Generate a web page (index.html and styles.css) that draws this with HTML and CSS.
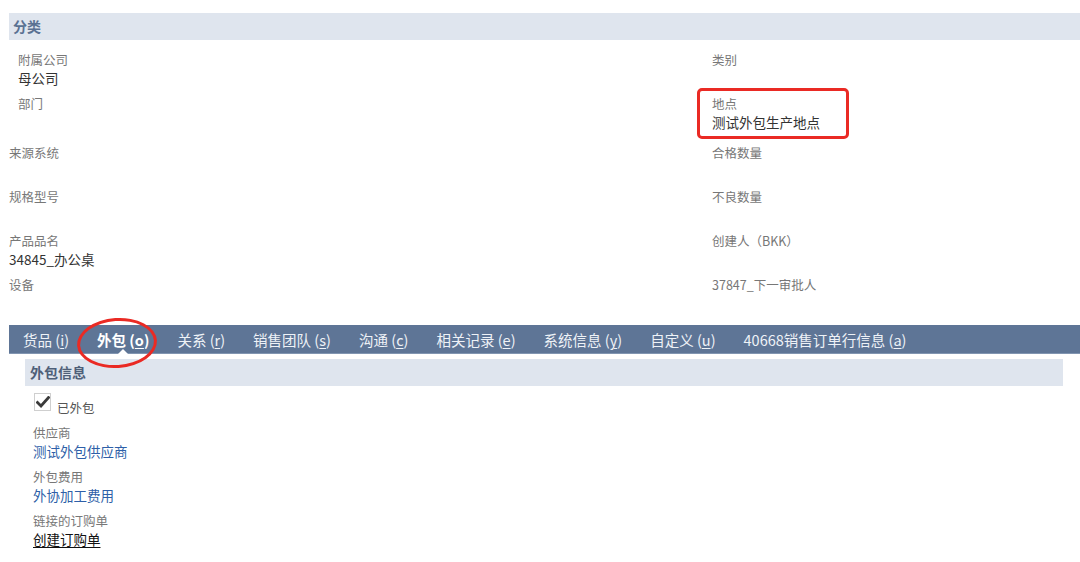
FILE: index.html
```html
<!DOCTYPE html>
<html lang="zh-CN">
<head>
    <meta charset="UTF-8">
    <title>分类</title>
    <link rel="stylesheet" href="styles.css">
</head>
<body>
    <div class="section-head">分类</div>

    <div class="fields">
        <div class="col">
            <div class="field indent">
                <div class="label">附属公司</div>
                <div class="value">母公司</div>
            </div>
            <div class="field indent">
                <div class="label">部门</div>
            </div>
            <div class="field gap-top">
                <div class="label">来源系统</div>
            </div>
            <div class="field">
                <div class="label">规格型号</div>
            </div>
            <div class="field">
                <div class="label">产品品名</div>
                <div class="value">34845_办公桌</div>
            </div>
            <div class="field">
                <div class="label">设备</div>
            </div>
        </div>
        <div class="col right">
            <div class="field">
                <div class="label">类别</div>
            </div>
            <div class="field marked">
                <div class="label">地点</div>
                <div class="value">测试外包生产地点</div>
                <span class="mark-box"></span>
            </div>
            <div class="field gap-top">
                <div class="label">合格数量</div>
            </div>
            <div class="field">
                <div class="label">不良数量</div>
            </div>
            <div class="field">
                <div class="label">创建人（BKK）</div>
            </div>
            <div class="field">
                <div class="label">37847_下一审批人</div>
            </div>
        </div>
    </div>

    <div class="tabs">
        <div class="tab">货品 (<u>i</u>)</div>
        <div class="tab active">外包 (<u>o</u>)<span class="mark-ring"></span></div>
        <div class="tab">关系 (<u>r</u>)</div>
        <div class="tab">销售团队 (<u>s</u>)</div>
        <div class="tab">沟通 (<u>c</u>)</div>
        <div class="tab">相关记录 (<u>e</u>)</div>
        <div class="tab">系统信息 (<u>y</u>)</div>
        <div class="tab">自定义 (<u>u</u>)</div>
        <div class="tab">40668销售订单行信息 (<u>a</u>)</div>
    </div>

    <div class="panel">
        <div class="sub-head">外包信息</div>
        <div class="check-row">
            <span class="checkbox">
                <svg width="14" height="12" viewBox="0 0 14 12"><path d="M1.5 6.5 L5 10 L12.5 1.5" fill="none" stroke="#3a3a3a" stroke-width="2.8" stroke-linecap="square"/></svg>
            </span>
            <span class="check-label">已外包</span>
        </div>
        <div class="field first">
            <div class="label">供应商</div>
            <div class="value link">测试外包供应商</div>
        </div>
        <div class="field">
            <div class="label">外包费用</div>
            <div class="value link">外协加工费用</div>
        </div>
        <div class="field">
            <div class="label">链接的订购单</div>
            <div class="value action">创建订购单</div>
        </div>
    </div>
</body>
</html>
```

FILE: styles.css
```css
body {
    margin: 13px 0 0 9px;
    font-family: "Noto Sans CJK SC", "Noto Sans", sans-serif;
    color: #333;
    background-color: #fff;
}
.section-head {
    height: 27px;
    line-height: 27px;
    padding-left: 4px;
    background-color: #dfe5ee;
    color: #5a7192;
    font-size: 14px;
    font-weight: bold;
}
.fields {
    display: grid;
    grid-template-columns: 703px 1fr;
    padding-top: 11px;
}
.field {
    position: relative;
    min-height: 44px;
}
.field.indent {
    padding-left: 9px;
}
.field.gap-top {
    margin-top: 5px;
}
.label {
    height: 18px;
    line-height: 18px;
    font-size: 12.5px;
    color: #777;
}
.value {
    height: 18px;
    line-height: 18px;
    font-size: 13.5px;
    color: #333;
}
.mark-box {
    position: absolute;
    left: -15px;
    top: -7px;
    width: 146px;
    height: 45px;
    border: 3px solid #ea2a24;
    border-radius: 5px;
}
.tabs {
    display: flex;
    height: 29px;
    margin-top: 5px;
    background-color: #5e7596;
    border-bottom: 1px solid #8195b1;
    box-sizing: border-box;
}
.tab {
    position: relative;
    padding: 0 14px;
    line-height: 29px;
    font-size: 14.5px;
    color: #eef2f7;
    white-space: nowrap;
}
.tab u {
    text-decoration-thickness: 1px;
    text-underline-offset: 2px;
}
.tab.active {
    font-weight: bold;
    color: #fff;
}
.tab.active::after {
    content: "";
    position: absolute;
    left: 50%;
    bottom: -1px;
    margin-left: -5px;
    border-left: 5px solid transparent;
    border-right: 5px solid transparent;
    border-bottom: 5px solid #fff;
}
.mark-ring {
    position: absolute;
    left: -6px;
    top: -7px;
    width: 74px;
    height: 44px;
    border: 3px solid #ea2a24;
    border-radius: 50%;
    transform: rotate(-4deg);
}
.panel {
    width: 1038px;
    margin: 5px 0 0 16px;
}
.sub-head {
    height: 27px;
    line-height: 27px;
    padding-left: 5px;
    background-color: #dfe5ee;
    color: #4e5f78;
    font-size: 14px;
    font-weight: bold;
}
.check-row {
    display: flex;
    align-items: center;
    height: 30px;
    padding: 2px 0 0 9px;
    box-sizing: border-box;
}
.checkbox {
    display: flex;
    align-items: center;
    justify-content: center;
    width: 15px;
    height: 16px;
    border: 1px solid #cfcfcf;
    background-color: #fff;
}
.check-label {
    margin-left: 6px;
    margin-top: 10px;
    font-size: 12.5px;
    color: #555;
}
.panel .field {
    padding-left: 8px;
}
.panel .field.first {
    margin-top: 8px;
}
.value.link {
    color: #2e5fa8;
}
.value.action {
    color: #111;
    text-decoration: underline;
    text-underline-offset: 2px;
}
```
